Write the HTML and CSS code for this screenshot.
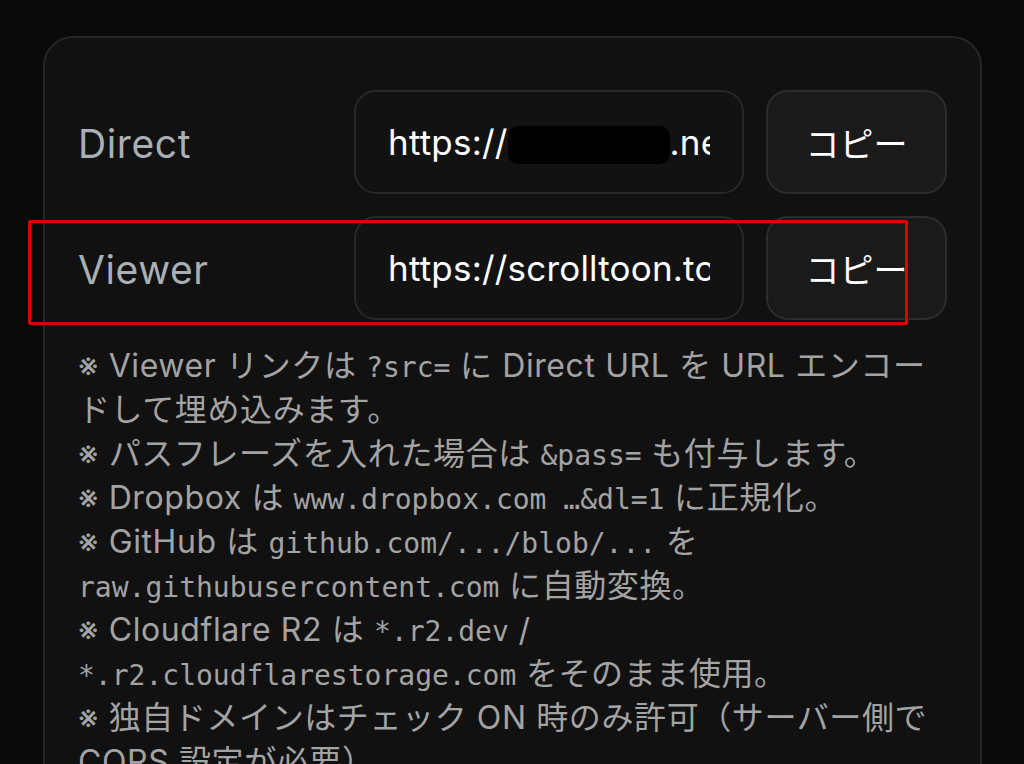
FILE: index.html
```html
<!DOCTYPE html>
<html lang="ja">
<head>
<meta charset="utf-8">
<link rel="stylesheet" href="styles.css">
</head>
<body>
<div class="card">
  <div class="rows">
    <div class="row">
      <div class="label">Direct</div>
      <div class="field"><span class="url">https://<span class="redact"></span>.net/files/sample.cbz</span></div>
      <button class="copy">コピー</button>
    </div>
    <div class="row">
      <div class="label">Viewer</div>
      <div class="field"><span class="url">https://scrolltoon.top/viewer?src=</span></div>
      <button class="copy">コピー</button>
      <div class="highlight"></div>
    </div>
  </div>
  <div class="notes">
    <p>※ Viewer リンクは <code>?src=</code> に Direct URL を URL エンコー<br>ドして埋め込みます。</p>
    <p>※ パスフレーズを入れた場合は <code>&amp;pass=</code> も付与します。</p>
    <p>※ Dropbox は <code>www.dropbox.com …&amp;dl=1</code> に正規化。</p>
    <p>※ GitHub は <code>github.com/.../blob/...</code> を<br><code>raw.githubusercontent.com</code> に自動変換。</p>
    <p>※ Cloudflare R2 は <code>*.r2.dev</code> /<br><code>*.r2.cloudflarestorage.com</code> をそのまま使用。</p>
    <p>※ 独自ドメインはチェック ON 時のみ許可（サーバー側で<br>CORS 設定が必要）。</p>
  </div>
</div>
</body>
</html>
```

FILE: styles.css
```css
html, body {
  margin: 0;
  padding: 0;
  background: #0a0a0a;
  height: 764px;
  overflow: hidden;
}
body {
  font-family: Inter, "Noto Sans CJK JP", sans-serif;
  color: #ffffff;
  padding: 36px 42px 0 43px;
}
.card {
  box-sizing: border-box;
  background: #111111;
  border: 2px solid #262626;
  border-radius: 30px;
  padding: 52px 32px 40px 33px;
  min-height: 800px;
}
.rows {
  display: flex;
  flex-direction: column;
  gap: 22px;
}
.row {
  position: relative;
  display: grid;
  grid-template-columns: 254px 390px 181px;
  column-gap: 22px;
  align-items: center;
}
.label {
  font-size: 39px;
  color: #a8b0b3;
  letter-spacing: 0.6px;
  padding-top: 2px;
}
.field {
  box-sizing: border-box;
  height: 104px;
  border: 2px solid #282828;
  border-radius: 22px;
  background: #121212;
  padding: 0 32px 0 32px;
  display: flex;
  align-items: center;
  overflow: hidden;
}
.url {
  font-size: 35px;
  letter-spacing: 0.2px;
  white-space: nowrap;
  overflow: hidden;
  display: block;
  width: 100%;
  line-height: 104px;
}
.redact {
  display: inline-block;
  width: 162px;
  height: 38px;
  background: #000;
  border-radius: 10px;
  vertical-align: -9px;
}
.copy {
  box-sizing: border-box;
  height: 104px;
  border: 2px solid #2c2c2c;
  border-radius: 22px;
  background: #1a1a1a;
  color: #ffffff;
  font-family: "Noto Sans CJK JP", sans-serif;
  font-size: 34px;
  padding: 0;
}
.highlight {
  position: absolute;
  left: -50px;
  top: 4px;
  width: 874px;
  height: 99px;
  border: 3px solid #e00000;
  border-radius: 2px;
  pointer-events: none;
}
.notes {
  margin-top: 24px;
  color: #a3a3a3;
  font-size: 32px;
  line-height: 44px;
  letter-spacing: 0.6px;
  width: 900px;
}
.notes p {
  margin: 0;
}
.notes code {
  font-family: "DejaVu Sans Mono", monospace;
  font-size: 28px;
  letter-spacing: 0;
  line-height: 1;
}
```
